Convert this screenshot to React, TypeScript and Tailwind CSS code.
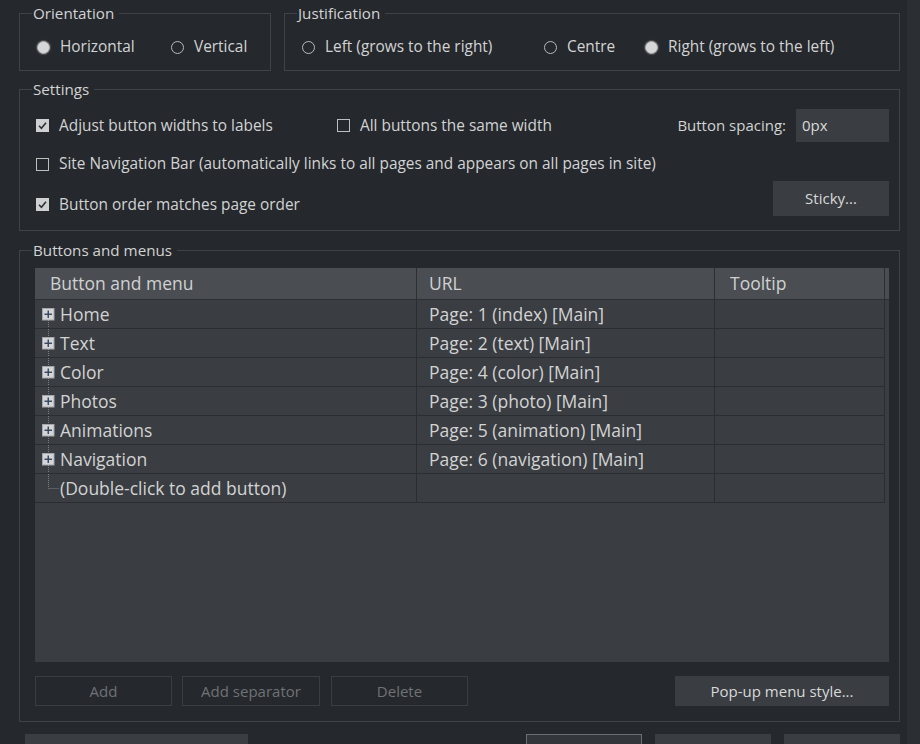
import type { ReactNode } from 'react';

const FONT = { fontFamily: '"Open Sans", "Noto Sans", sans-serif' };

/** Group box: a fieldset with its title sitting on the top border */
function GroupBox({ title, className, children }: { title: string; className: string; children: ReactNode }) {
  return (
    <fieldset className={`shrink-0 border border-[#3f4246] ${className}`}>
      <legend className="ml-[12px] pl-[1px] pr-[5px] text-[15.2px] leading-[18px] text-[#d2d3d4]">{title}</legend>
      {children}
    </fieldset>
  );
}

function Radio({ label, checked, className = '' }: { label: string; checked?: boolean; className?: string }) {
  return (
    <div className={`flex items-center ${className}`}>
      {checked ? (
        <span className="w-[13px] h-[13px] rounded-full bg-[#d6d7d8] border border-[#a9abad] shadow-[0_0_1px_1px_rgba(200,200,200,0.25)]" />
      ) : (
        <span className="w-[13px] h-[13px] rounded-full border border-[#b9bbbd]" />
      )}
      <span className="ml-[10px] text-[15.4px] text-[#d2d3d4] whitespace-nowrap">{label}</span>
    </div>
  );
}

function Check({ label, checked, className = '' }: { label: string; checked?: boolean; className?: string }) {
  return (
    <div className={`flex items-center ${className}`}>
      {checked ? (
        <svg width="13" height="13" viewBox="0 0 13 13" className="shrink-0">
          <rect x="0" y="0" width="13" height="13" fill="#cfd0d2" />
          <path d="M3 6.8 L5.4 9.2 L10 3.8" fill="none" stroke="#2d3034" strokeWidth="1.6" />
        </svg>
      ) : (
        <span className="shrink-0 w-[13px] h-[13px] border border-[#bcbec0]" />
      )}
      <span className="ml-[10px] text-[15.4px] text-[#d2d3d4] whitespace-nowrap">{label}</span>
    </div>
  );
}

/** Tree gutter: dotted connector plus the expander box */
function TreeGutter({ kind }: { kind: 'first' | 'mid' | 'last' }) {
  const dots = '1 1';
  return (
    <svg width="25" height="28" viewBox="0 0 25 28" className="shrink-0">
      {kind === 'first' && <line x1="13.5" y1="14" x2="13.5" y2="28" stroke="#7c7f83" strokeDasharray={dots} />}
      {kind === 'mid' && <line x1="13.5" y1="0" x2="13.5" y2="28" stroke="#7c7f83" strokeDasharray={dots} />}
      {kind === 'last' && (
        <>
          <line x1="13.5" y1="0" x2="13.5" y2="14.5" stroke="#7c7f83" strokeDasharray={dots} />
          <line x1="13.5" y1="14.5" x2="24" y2="14.5" stroke="#7c7f83" strokeDasharray={dots} />
        </>
      )}
      {kind !== 'last' && (
        <>
          <rect x="7.5" y="8.5" width="11.5" height="11.5" fill="#d3d5d8" stroke="#a4a7ab" />
          <line x1="9.5" y1="14.25" x2="17" y2="14.25" stroke="#34465c" strokeWidth="1.4" />
          <line x1="13.25" y1="10.5" x2="13.25" y2="18" stroke="#34465c" strokeWidth="1.4" />
        </>
      )}
    </svg>
  );
}

const rows = [
  { name: 'Home', url: 'Page: 1 (index) [Main]' },
  { name: 'Text', url: 'Page: 2 (text) [Main]' },
  { name: 'Color', url: 'Page: 4 (color) [Main]' },
  { name: 'Photos', url: 'Page: 3 (photo) [Main]' },
  { name: 'Animations', url: 'Page: 5 (animation) [Main]' },
  { name: 'Navigation', url: 'Page: 6 (navigation) [Main]' },
];

export default function App() {
  return (
    <div className="w-[920px] h-[744px] bg-[#25282c] flex overflow-hidden" style={FONT}>
      <div className="w-[881px] ml-[19px] pt-[4px] flex flex-col shrink-0">
        {/* Orientation + Justification */}
        <div className="flex gap-[13px] shrink-0">
          <GroupBox title="Orientation" className="w-[252px] h-[67px]">
            <div className="flex pt-[15px] pl-[17px] h-[20px] box-content items-center">
              <Radio label="Horizontal" checked className="w-[134px]" />
              <Radio label="Vertical" />
            </div>
          </GroupBox>
          <GroupBox title="Justification" className="w-[616px] h-[67px]">
            <div className="flex pt-[15px] pl-[17px] h-[20px] box-content items-center">
              <Radio label="Left (grows to the right)" className="w-[242px]" />
              <Radio label="Centre" className="w-[101px]" />
              <Radio label="Right (grows to the left)" checked />
            </div>
          </GroupBox>
        </div>

        {/* Settings */}
        <GroupBox title="Settings" className="mt-[9px] h-[151px]">
          <div className="pt-[11px] pl-[16px] pr-[10px] flex flex-col">
            <div className="flex items-center h-[33px]">
              <Check label="Adjust button widths to labels" checked className="w-[301px]" />
              <Check label="All buttons the same width" />
              <span className="ml-auto mr-[10px] text-[15px] text-[#d2d3d4]">Button spacing:</span>
              <div className="w-[93px] h-[33px] bg-[#3a3d41] flex items-center pl-[6px] text-[15px] text-[#d8d9da]">0px</div>
            </div>
            <div className="flex items-center h-[20px] mt-[12px]">
              <Check label="Site Navigation Bar (automatically links to all pages and appears on all pages in site)" />
            </div>
            <div className="flex items-center justify-between h-[35px] mt-[7px]">
              <Check label="Button order matches page order" checked className="pt-[12px]" />
              <button className="w-[116px] h-[35px] bg-[#3a3d41] text-[15px] text-[#d8d9da]">Sticky...</button>
            </div>
          </div>
        </GroupBox>

        {/* Buttons and menus */}
        <GroupBox title="Buttons and menus" className="mt-[10px] h-[481px]">
          <div className="pt-[9px] pl-[15px] pr-[10px] flex flex-col">
            <div className="h-[394px] bg-[#3a3d41] flex flex-col">
              <div className="flex h-[32px] shrink-0 bg-[#4a4d51] border-b border-[#2c2f33] text-[17.5px] text-[#d0d1d3]">
                <div className="w-[382px] pl-[15px] flex items-center border-r border-[#2c2f33]">Button and menu</div>
                <div className="w-[298px] pl-[12px] flex items-center border-r border-[#2c2f33]">URL</div>
                <div className="w-[170px] pl-[15px] flex items-center border-r border-[#2c2f33]">Tooltip</div>
              </div>
              {rows.map((r, i) => (
                <div key={r.name} className="flex h-[29px] shrink-0 text-[17.5px] text-[#d2d3d4]">
                  <div className="w-[382px] flex items-center border-r border-b border-[#2b2e31]">
                    <TreeGutter kind={i === 0 ? 'first' : 'mid'} />
                    <span>{r.name}</span>
                  </div>
                  <div className="w-[298px] pl-[12px] flex items-center border-r border-b border-[#2b2e31]">{r.url}</div>
                  <div className="w-[170px] border-r border-b border-[#2b2e31]" />
                </div>
              ))}
              <div className="flex h-[29px] shrink-0 text-[17.5px] text-[#d2d3d4]">
                <div className="w-[382px] flex items-center border-r border-b border-[#2b2e31]">
                  <TreeGutter kind="last" />
                  <span>(Double-click to add button)</span>
                </div>
                <div className="w-[298px] border-r border-b border-[#2b2e31]" />
                <div className="w-[170px] border-r border-b border-[#2b2e31]" />
              </div>
            </div>
            <div className="flex mt-[14px] h-[30px] text-[15px]">
              <button className="w-[137px] border border-[#3a3d41] text-[#6f7276]">Add</button>
              <button className="w-[138px] ml-[10px] border border-[#3a3d41] text-[#6f7276]">Add separator</button>
              <button className="w-[137px] ml-[11px] border border-[#3a3d41] text-[#6f7276]">Delete</button>
              <button className="w-[214px] ml-auto bg-[#3a3d41] text-[#d8d9da]">Pop-up menu style...</button>
            </div>
          </div>
        </GroupBox>

        {/* Dialog buttons (cut off at the bottom) */}
        <div className="flex shrink-0 mt-[12px] h-[30px] pl-[6px]">
          <div className="w-[223px] bg-[#3a3d41]" />
          <div className="w-[116px] ml-auto border border-[#6a6d71] bg-[#33363a]" />
          <div className="w-[116px] ml-[13px] bg-[#3a3d41]" />
          <div className="w-[116px] ml-[13px] bg-[#3a3d41]" />
        </div>
      </div>
      <div className="ml-auto w-[13px] bg-[#2b2e32]" />
    </div>
  );
}
